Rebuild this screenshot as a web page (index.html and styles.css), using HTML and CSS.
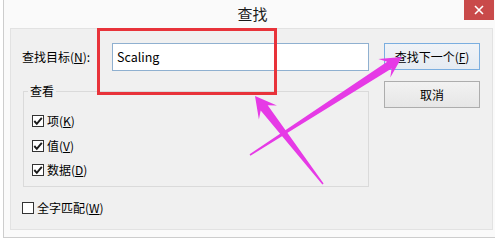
FILE: index.html
```html
<!DOCTYPE html>
<html lang="zh-CN">
<head>
<meta charset="utf-8">
<title>查找</title>
<link rel="stylesheet" href="styles.css">
</head>
<body>
<div class="window">
  <div class="titlebar">
    <div></div>
    <div class="title">查找</div>
    <div class="close">
      <svg width="30" height="20" viewBox="0 0 30 20"><path d="M11 6 L19 14 M19 6 L11 14" stroke="#fff" stroke-width="1.6" fill="none"/></svg>
    </div>
  </div>
  <div class="panel">
    <div class="left">
      <div class="row-find">
        <label class="lbl">查找目标(<u>N</u>):</label>
        <div class="input">Scaling</div>
      </div>
      <fieldset class="group">
        <legend>查看</legend>
        <div class="opts">
          <div class="opt"><span class="cb"><svg width="10" height="10" viewBox="0 0 10 10"><path d="M1.3 5 L3.8 7.8 L8.8 1.8" stroke="#1a1a1a" stroke-width="1.9" fill="none"/></svg></span><span>项(<u>K</u>)</span></div>
          <div class="opt"><span class="cb"><svg width="10" height="10" viewBox="0 0 10 10"><path d="M1.3 5 L3.8 7.8 L8.8 1.8" stroke="#1a1a1a" stroke-width="1.9" fill="none"/></svg></span><span>值(<u>V</u>)</span></div>
          <div class="opt"><span class="cb"><svg width="10" height="10" viewBox="0 0 10 10"><path d="M1.3 5 L3.8 7.8 L8.8 1.8" stroke="#1a1a1a" stroke-width="1.9" fill="none"/></svg></span><span>数据(<u>D</u>)</span></div>
        </div>
      </fieldset>
      <div class="opt whole"><span class="cb"></span><span>全字匹配(<u>W</u>)</span></div>
    </div>
    <div class="right">
      <div class="btn default">查找下一个(<u>F</u>)</div>
      <div class="btn">取消</div>
    </div>
  </div>
</div>
<svg class="overlay" width="495" height="241" viewBox="0 0 495 241">
  <rect x="98.5" y="29.5" width="177" height="64" fill="none" stroke="#e8333a" stroke-width="3"/>
  <polygon fill="#e63ae6" points="255,96 276.9,105.6 267.7,105.3 323.6,183.5 322.4,184.5 260.7,110.4 258.9,119.5"/>
  <polygon fill="#e63ae6" points="402,57 390.3,77.6 391.6,68.5 250.4,155.7 249.6,154.3 387.2,61.8 378.4,59.1"/>
</svg>
</body>
</html>
```
FILE: styles.css
```css
* { box-sizing: border-box; }
html, body {
  margin: 0;
  padding: 0;
}
body {
  width: 495px;
  height: 241px;
  overflow: hidden;
  background: #ffffff;
  position: relative;
  font-family: "Noto Sans CJK SC", "Noto Sans", sans-serif;
  font-size: 12px;
  color: #000;
}
u { text-decoration: underline; text-underline-offset: 1px; }
.window {
  margin-left: 3px;
  width: 492px;
  height: 238px;
  background: #fafafa;
  border-left: 1px solid #cdcdcd;
  border-bottom: 1px solid #cdcdcd;
}
.titlebar {
  height: 28px;
  display: grid;
  grid-template-columns: 1fr auto 1fr;
  align-items: start;
}
.title {
  font-size: 15px;
  line-height: 28px;
  padding-left: 6px;
  color: #1a1a1a;
}
.close {
  justify-self: end;
  width: 30px;
  height: 20px;
  margin-right: 1px;
  background: #c94a4a;
  display: flex;
}
.panel {
  margin-left: 6px;
  width: 483px;
  height: 202px;
  background: #f0f0f0;
  border: 1px solid #e2e2e2;
  display: flex;
  gap: 15px;
  padding: 14px 0 0 11px;
}
.left {
  width: 347px;
  display: flex;
  flex-direction: column;
}
.row-find {
  display: flex;
  align-items: center;
  height: 28px;
}
.lbl {
  width: 90px;
  line-height: 16px;
}
.input {
  width: 257px;
  height: 28px;
  border: 1px solid #8fb0d0;
  background: #fff;
  padding-left: 4px;
  line-height: 25px;
  font-size: 12.5px;
}
.group {
  margin: 12px 0 0 1px;
  width: 346px;
  border: 1px solid #dadada;
  padding: 14px 8px 8px 8px;
  min-width: 0;
}
.group legend {
  padding: 0 2px;
  margin-left: -4px;
  line-height: 16px;
}
.opts {
  display: flex;
  flex-direction: column;
  gap: 8.5px;
}
.opt {
  display: flex;
  align-items: center;
  gap: 3px;
  height: 16px;
  line-height: 16px;
}
.cb {
  width: 12px;
  height: 12px;
  border: 1px solid #333;
  background: #fff;
  display: flex;
  align-items: center;
  justify-content: center;
  flex: none;
}
.whole {
  margin-top: 13px;
}
.right {
  display: flex;
  flex-direction: column;
  gap: 11px;
  padding-top: 0;
}
.btn {
  width: 96px;
  height: 27px;
  border: 1px solid #adadad;
  background: linear-gradient(#f2f2f2, #e6e6e6);
  display: flex;
  align-items: center;
  justify-content: center;
  line-height: 16px;
}
.btn.default {
  border-color: #7aaee0;
  background: linear-gradient(#f0f3f7, #e5ebf2);
}
.overlay {
  position: absolute;
  left: 0;
  top: 0;
  pointer-events: none;
}
```
